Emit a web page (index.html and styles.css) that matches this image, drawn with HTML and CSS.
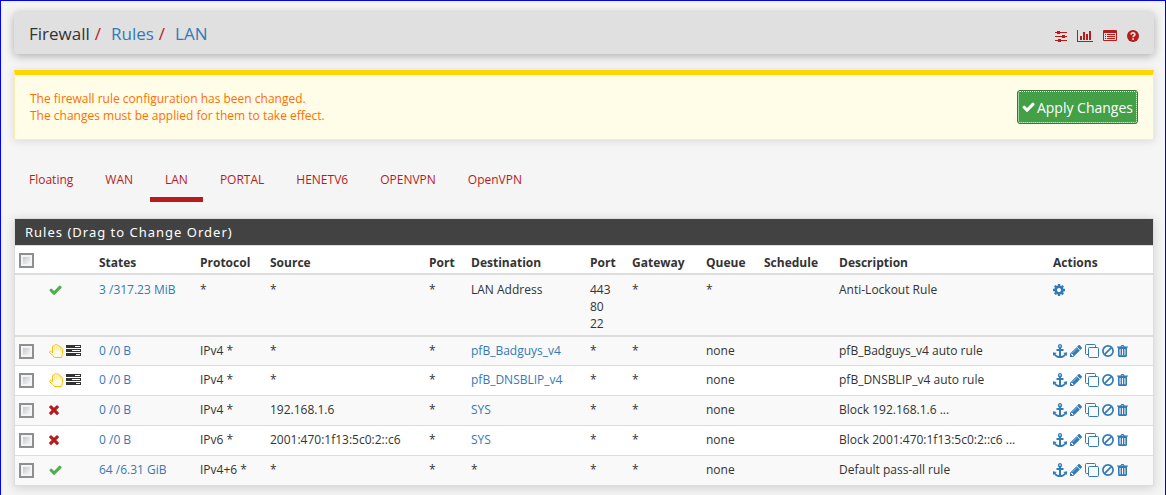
FILE: index.html
```
<!DOCTYPE html>
<html lang="en">
<head>
<meta charset="utf-8">
<title>Firewall: Rules: LAN</title>
<link rel="stylesheet" href="styles.css">
</head>
<body>
<svg class="sprite" aria-hidden="true">
  <symbol id="check" viewBox="110 260 1570 1270"><path d="M1671 566q0 40-28 68l-724 724-136 136q-28 28-68 28t-68-28l-136-136-362-362q-28-28-28-68t28-68l136-136q28-28 68-28t68 28l294 295 656-657q28-28 68-28t68 28l136 136q28 28 28 68z"/></symbol>
  <symbol id="times" viewBox="290 346 1210 1210"><path d="M1490 1322q0 40-28 68l-136 136q-28 28-68 28t-68-28l-294-294-294 294q-28 28-68 28t-68-28l-136-136q-28-28-28-68t28-68l294-294-294-294q-28-28-28-68t28-68l136-136q28-28 68-28t68 28l294 294 294-294q28-28 68-28t68 28l136 136q28 28 28 68t-28 68l-294 294 294 294q28 28 28 68z"/></symbol>
  <symbol id="pencil" viewBox="128 146 1520 1520"><path d="M491 1536l91-91-235-235-91 91v107h128v128h107zm523-928q0-22-22-22-10 0-17 7l-542 542q-7 7-7 17 0 22 22 22 10 0 17-7l542-542q7-7 7-17zm-54-192l416 416-832 832h-416v-416zm683 96q0 53-37 90l-166 166-416-416 166-165q36-38 90-38 53 0 91 38l235 234q37 39 37 91z"/></symbol>
  <symbol id="cog" viewBox="128 128 1536 1536"><path d="M1152 896q0-106-75-181t-181-75-181 75-75 181 75 181 181 75 181-75 75-181zm512-109v222q0 12-8 23t-20 13l-185 28q-19 54-39 91 35 50 107 138 10 12 10 25t-9 23q-27 37-99 108t-94 71q-12 0-26-9l-138-108q-44 23-91 38-16 136-29 186-7 28-36 28h-222q-14 0-24.500-8.500t-11.500-21.500l-28-184q-49-16-90-37l-141 107q-10 9-25 9-14 0-25-11-126-114-165-168-7-10-7-23 0-12 8-23 15-21 51-66.500t54-70.500q-27-50-41-99l-183-27q-13-2-21-12.500t-8-23.500v-222q0-12 8-23t19-13l186-28q14-46 39-92-40-57-107-138-10-12-10-24 0-10 9-23 26-36 98.500-107.500t94.500-71.500q13 0 26 10l138 107q44-23 91-38 16-136 29-186 7-28 36-28h222q14 0 24.500 8.500t11.500 21.500l28 184q49 16 90 37l142-107q9-9 24-9 13 0 25 10 129 119 165 170 7 8 7 22 0 12-8 23-15 21-51 66.500t-54 70.500q26 50 41 98l183 28q13 2 21 12.500t8 23.500z"/></symbol>
  <symbol id="anchor" viewBox="0 0 14 14"><path fill-rule="evenodd" d="M7 0a2.200 2.200 0 0 1 1 4.150V5h2.500v2H8v4.900c1.800-.25 3-.95 3.500-1.900L10.300 8.900 14 8.300v3.600l-1-1C11.800 12.800 9.600 14 7 14S2.200 12.800 1 10.900l-1 1V8.300l3.700.6L2.500 10c.5.950 1.700 1.650 3.500 1.900V7H3.500V5H6v-.85A2.200 2.200 0 0 1 7 0zm0 1.300a.8.8 0 1 0 0 1.600.8.8 0 0 0 0-1.600z"/></symbol>
  <symbol id="clone" viewBox="0 0 14 14"><path fill="none" stroke="currentColor" d="M3.500 10.500h-2a1 1 0 0 1-1-1v-8a1 1 0 0 1 1-1h8a1 1 0 0 1 1 1v2M4.500 3.500h8a1 1 0 0 1 1 1v8a1 1 0 0 1-1 1h-8a1 1 0 0 1-1-1v-8a1 1 0 0 1 1-1z"/></symbol>
  <symbol id="ban" viewBox="0 0 12 12"><g fill="none" stroke="currentColor" stroke-width="1.700"><circle cx="6" cy="6" r="5.100"/><path d="M2.400 9.600l7.200-7.200"/></g></symbol>
  <symbol id="trash" viewBox="0 0 11 12"><path fill-rule="evenodd" d="M3.500 1.500L4 .4Q4.200 0 4.700 0h1.600q.5 0 .7.400l.5 1.100H11v1.100h-1v8Q10 12 8.800 12H2.200Q1 12 1 10.600v-8H0V1.500zM4.600 1.500h1.800L6.100.9H4.900zM2.600 4v6.200h1V4zM5 4v6.200h1V4zM7.400 4v6.200h1V4z"/></symbol>
  <symbol id="hand" viewBox="0 0 14 14"><path fill="#fffbe6" stroke="currentColor" stroke-linejoin="round" d="M3.500 9V3q0-1.200 1.200-1.200Q5.500 1.800 5.500 1.500q.2-1 1.200-1t1.200.7q.3-.2.800-.2 1 0 1.200 1.200 1.600-.2 1.600 1.500 2 0 2 1.600V9.500q0 1.200-.5 2.300-.5 1-.5 1.700H5.500Q4.500 11.800.9 9 .2 8.100.8 7.500t1.400-.1z"/><path fill="none" stroke="currentColor" stroke-width=".4" d="M5.700 2v4.500M7.900 1.500v5M9.900 2.200v4.300M11.600 4v3"/></symbol>
  <symbol id="tasks" viewBox="0 0 15 11"><path fill-rule="evenodd" d="M0 0h15v3H0zM9 1v1h5V1zM0 4h15v3H0zM6 5v1h8V5zM0 8h15v3H0zM10 9v1h4V9z"/></symbol>
  <symbol id="sliders" viewBox="0 0 12 12"><path d="M0 2h2V1h3v1h7v1H5v1H2V3H0zM0 6h7V5h3v1h2v1h-2v1H7V7H0zM0 10h3V9h3v1h6v1H6v1H3v-1H0z"/></symbol>
  <symbol id="chart" viewBox="0 0 16 12"><path d="M0 0h1v11h15v1H0zM3 6h2v4H3zM6 2h2v8H6zM9 4h2v6H9zM12 1h2v9h-2z"/></symbol>
  <symbol id="list" viewBox="0 0 14 11"><path fill-rule="evenodd" d="M1 0h12q1 0 1 1v9q0 1-1 1H1q-1 0-1-1V1q0-1 1-1zM1 3v7h12V3zM2 4h1v1H2zM4 4h8v1H4zM2 6h1v1H2zM4 6h8v1H4zM2 8h1v1H2zM4 8h8v1H4z"/></symbol>
  <symbol id="help" viewBox="0 0 12 12"><circle cx="6" cy="6" r="6"/><path fill="none" stroke="#e0e0e0" stroke-width="1.700" d="M4 4.500Q4.300 2.800 6 2.800T7.900 4.400Q7.900 5.300 6.900 5.800 6.100 6.200 6.100 7.300M6.100 8.300V10"/></symbol>
</svg>

<div class="page">
  <header class="titlebar">
    <ol class="breadcrumb">
      <li>Firewall</li>
      <li><a href="#">Rules</a></li>
      <li><a href="#">LAN</a></li>
    </ol>
    <nav class="tools" aria-label="Page tools">
      <a href="#" aria-label="Advanced filter"><svg width="12" height="12"><use href="#sliders"/></svg></a>
      <a href="#" aria-label="Status"><svg width="16" height="12"><use href="#chart"/></svg></a>
      <a href="#" aria-label="Log"><svg width="14" height="11"><use href="#list"/></svg></a>
      <a href="#" aria-label="Help"><svg width="12" height="12"><use href="#help"/></svg></a>
    </nav>
  </header>

  <section class="notice">
    <p>The firewall rule configuration has been changed.<br>The changes must be applied for them to take effect.</p>
    <button type="button" class="apply"><svg width="13" height="10"><use href="#check"/></svg>Apply Changes</button>
  </section>

  <nav class="tabs" aria-label="Interfaces">
    <a href="#">Floating</a>
    <a href="#">WAN</a>
    <a href="#" class="active">LAN</a>
    <a href="#">PORTAL</a>
    <a href="#">HENETV6</a>
    <a href="#">OPENVPN</a>
    <a href="#">OpenVPN</a>
  </nav>

  <section class="panel">
    <h2>Rules (Drag to Change Order)</h2>
    <table>
      <colgroup><col class="c-check"><col class="c-icon"><col class="c-states"><col class="c-proto"><col class="c-source"><col class="c-port"><col class="c-dest"><col class="c-port"><col class="c-gateway"><col class="c-queue"><col class="c-schedule"><col class="c-desc"><col class="c-actions"></colgroup>
      <thead>
        <tr><th><input type="checkbox" aria-label="Select all rules"></th><th></th><th>States</th><th>Protocol</th><th>Source</th><th>Port</th><th>Destination</th><th>Port</th><th>Gateway</th><th>Queue</th><th>Schedule</th><th>Description</th><th>Actions</th></tr>
      </thead>
      <tbody class="builtin">
        <tr><td></td><td><span class="icons pass"><svg width="13" height="10"><use href="#check"/></svg></span></td><td><a href="#">3 /317.23 MiB</a></td><td>*</td><td>*</td><td>*</td><td>LAN Address</td><td>443<br>80<br>22</td><td>*</td><td>*</td><td></td><td>Anti-Lockout Rule</td><td><span class="icons"><a href="#" aria-label="Settings"><svg width="12" height="12"><use href="#cog"/></svg></a></span></td></tr>
      </tbody>
      <tbody class="rules">
        <tr><td><input type="checkbox" aria-label="Select pfB_Badguys_v4 rule"></td><td><span class="icons"><svg class="reject" width="14" height="14"><use href="#hand"/></svg><svg width="15" height="11"><use href="#tasks"/></svg></span></td><td><a href="#">0 /0 B</a></td><td>IPv4 *</td><td>*</td><td>*</td><td><a href="#">pfB_Badguys_v4</a></td><td>*</td><td>*</td><td>none</td><td></td><td>pfB_Badguys_v4 auto rule</td><td class="actions"></td></tr>
        <tr><td><input type="checkbox" aria-label="Select pfB_DNSBLIP_v4 rule"></td><td><span class="icons"><svg class="reject" width="14" height="14"><use href="#hand"/></svg><svg width="15" height="11"><use href="#tasks"/></svg></span></td><td><a href="#">0 /0 B</a></td><td>IPv4 *</td><td>*</td><td>*</td><td><a href="#">pfB_DNSBLIP_v4</a></td><td>*</td><td>*</td><td>none</td><td></td><td>pfB_DNSBLIP_v4 auto rule</td><td class="actions"></td></tr>
        <tr><td><input type="checkbox" aria-label="Select block 192.168.1.6 rule"></td><td><span class="icons block"><svg width="10" height="10"><use href="#times"/></svg></span></td><td><a href="#">0 /0 B</a></td><td>IPv4 *</td><td>192.168.1.6</td><td>*</td><td><a href="#">SYS</a></td><td>*</td><td>*</td><td>none</td><td></td><td>Block 192.168.1.6 ...</td><td class="actions"></td></tr>
        <tr><td><input type="checkbox" aria-label="Select block 2001:470:1f13:5c0:2::c6 rule"></td><td><span class="icons block"><svg width="10" height="10"><use href="#times"/></svg></span></td><td><a href="#">0 /0 B</a></td><td>IPv6 *</td><td>2001:470:1f13:5c0:2::c6</td><td>*</td><td><a href="#">SYS</a></td><td>*</td><td>*</td><td>none</td><td></td><td>Block 2001:470:1f13:5c0:2::c6 ...</td><td class="actions"></td></tr>
        <tr><td><input type="checkbox" aria-label="Select default pass-all rule"></td><td><span class="icons pass"><svg width="13" height="10"><use href="#check"/></svg></span></td><td><a href="#">64 /6.31 GiB</a></td><td>IPv4+6 *</td><td>*</td><td>*</td><td>*</td><td>*</td><td>*</td><td>none</td><td></td><td>Default pass-all rule</td><td class="actions"></td></tr>
      </tbody>
    </table>
  </section>
</div>

<template id="rule-actions">
  <span class="icons">
    <a href="#" aria-label="Move checked rules here"><svg width="14" height="14"><use href="#anchor"/></svg></a>
    <a href="#" aria-label="Edit"><svg width="12" height="12"><use href="#pencil"/></svg></a>
    <a href="#" aria-label="Copy"><svg width="14" height="14"><use href="#clone"/></svg></a>
    <a href="#" aria-label="Disable"><svg width="12" height="12"><use href="#ban"/></svg></a>
    <a href="#" aria-label="Delete"><svg width="11" height="12"><use href="#trash"/></svg></a>
  </span>
</template>
<script src="rules.js"></script>
</body>
</html>
```
FILE: rules.js
```
const actions = document.getElementById('rule-actions');
document.querySelectorAll('td.actions').forEach((cell) => {
  cell.appendChild(actions.content.cloneNode(true));
});
```
FILE: styles.css
```
* { box-sizing: border-box; }

body {
  margin: 0;
  background: #f5f5f5;
  color: #333;
  font: 12px/17px "Open Sans", "Noto Sans", sans-serif;
}

a { color: #337ab7; text-decoration: none; }
svg { display: block; flex: none; fill: currentColor; }
.sprite { position: absolute; width: 0; height: 0; }

.page {
  min-height: 100vh;
  padding: 11px 11px 9px 13px;
  border: 1px solid #00f;
}

.titlebar {
  display: flex;
  justify-content: space-between;
  align-items: center;
  height: 42px;
  padding: 0 15px;
  border-radius: 3px;
  background: #e0e0e0;
  box-shadow: 0 2px 10px rgba(0, 0, 0, .3);
}

.breadcrumb {
  display: flex;
  margin: 0;
  padding: 2px 0 0;
  list-style: none;
  font-size: 17px;
  line-height: 24px;
}
.breadcrumb li + li::before {
  content: "/";
  padding: 0 10px 0 5px;
  color: #b71c1c;
}

.tools { display: flex; gap: 10px; padding-top: 6px; }
.tools a { color: #b71c1c; }

.notice {
  display: flex;
  justify-content: space-between;
  align-items: center;
  margin-top: 16px;
  padding: 15px;
  border: 1px solid #ffecb3;
  border-top: 5px solid #ffd600;
  background: #fffde7;
  color: #ff6f00;
  box-shadow: 0 1px 8px rgba(0, 0, 0, .12);
}
.notice p { margin: 0; }

.apply {
  display: flex;
  align-items: center;
  gap: 2px;
  height: 34px;
  padding: 0 4px;
  border: 1px solid #357a38;
  border-radius: 3px;
  outline: 1px dotted #fff;
  outline-offset: -2px;
  background: #43a047;
  color: #fff;
  font: inherit;
  font-size: 14px;
}

.tabs { display: flex; margin-top: 24px; }
.tabs a {
  padding: 7px 15px 9px;
  border-bottom: 5px solid transparent;
  color: #b71c1c;
  margin-right: 2px;
}
.tabs .active { border-color: #b71c1c; }

.panel {
  margin-top: 16px;
  border: 1px solid #ddd;
  background: #fff;
  box-shadow: 0 2px 10px rgba(0, 0, 0, .15);
}
.panel h2 {
  margin: 0;
  padding: 4px 10px;
  background: #424242;
  color: #fff;
  font-family: "Noto Sans", "Open Sans", sans-serif;
  font-size: 13px;
  font-weight: 400;
  line-height: 18px;
  letter-spacing: 1px;
}

table { width: 100%; border-collapse: separate; border-spacing: 0; table-layout: fixed; }
th, td { padding: 4px; text-align: left; vertical-align: top; white-space: nowrap; }
th {
  height: 30px;
  padding-bottom: 2px;
  border-top: 1px solid #ddd;
  border-bottom: 2px solid #ddd;
  vertical-align: bottom;
}
th:first-child { vertical-align: top; padding-top: 7px; }
td { padding-top: 5px; }
tr:nth-child(odd) td { background: #f9f9f9; }
.builtin td { padding-top: 6px; padding-bottom: 3px; }
.rules td { height: 30px; border-top: 1px solid #ddd; }
.rules tr:first-child td { border-top-width: 2px; }

.c-check { width: 30px; }
.c-icon { width: 50px; }
.c-states { width: 101px; }
.c-proto { width: 70px; }
.c-source { width: 159px; }
.c-port { width: 42px; }
.c-dest { width: 119px; }
.c-gateway { width: 74px; }
.c-queue { width: 58px; }
.c-schedule { width: 75px; }
.c-desc { width: 214px; }
.c-actions { width: 104px; }

input[type="checkbox"] {
  display: block;
  appearance: none;
  width: 15px;
  height: 15px;
  margin: 0;
  border: 2px solid #8e8f8f;
  background: linear-gradient(135deg, #c4c8d0, #f6f6f6) content-box, #f4f4f4;
  padding: 2px;
}
.rules input { margin-top: 2px; }

.icons { display: flex; align-items: center; gap: 3px; height: 17px; }
.pass { color: #4caf50; }
.block { color: #b71c1c; }
.reject { color: #ffc107; }
```
